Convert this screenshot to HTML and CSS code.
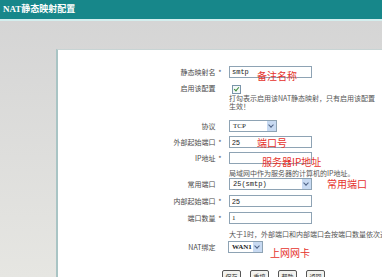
FILE: index.html
```html
<!DOCTYPE html>
<html lang="zh-CN">
<head>
    <meta charset="UTF-8">
    <title>NAT静态映射配置</title>
    <link rel="stylesheet" href="styles.css">
</head>
<body>
    <div class="title-bar">NAT静态映射配置</div>
    <div class="title-line"></div>

    <div class="page">
        <div class="panel">
            <form class="nat-form">
                <label class="lbl">静态映射名 <span class="req">*</span></label>
                <div class="cell"><input class="txt mono" type="text" value="smtp"></div>

                <label class="lbl">启用该配置 <span class="req blank">*</span></label>
                <div class="cell"><span class="check"></span></div>

                <div class="cell help two-lines">打勾表示启用该NAT静态映射，只有启用该配置<br>生效！</div>

                <label class="lbl">协议 <span class="req blank">*</span></label>
                <div class="cell">
                    <div class="sel sel-proto"><span class="sel-val serif">TCP</span><span class="arrow"></span></div>
                </div>

                <label class="lbl">外部起始端口 <span class="req">*</span></label>
                <div class="cell"><input class="txt" type="text" value="25"></div>

                <label class="lbl">IP地址 <span class="req">*</span></label>
                <div class="cell"><input class="txt" type="text" value=""></div>

                <div class="cell help">局域网中作为服务器的计算机的IP地址。</div>

                <label class="lbl">常用端口 <span class="req blank">*</span></label>
                <div class="cell">
                    <div class="sel sel-wide"><span class="sel-val mono">25(smtp)</span><span class="arrow"></span></div>
                </div>

                <label class="lbl">内部起始端口 <span class="req">*</span></label>
                <div class="cell"><input class="txt" type="text" value="25"></div>

                <label class="lbl">端口数量 <span class="req">*</span></label>
                <div class="cell"><input class="txt serif" type="text" value="1"></div>

                <div class="cell help">大于1时，外部端口和内部端口会按端口数量依次递增</div>

                <label class="lbl">NAT绑定 <span class="req blank">*</span></label>
                <div class="cell">
                    <div class="sel sel-nat"><span class="sel-val serif bold">WAN1</span><span class="arrow"></span></div>
                </div>

                <div class="buttons">
                    <button type="button">保存</button>
                    <button type="button">重填</button>
                    <button type="button">帮助</button>
                    <button type="button">返回</button>
                </div>
            </form>
        </div>

        <!-- red notes drawn over the form -->
        <span class="note note-name">备注名称</span>
        <span class="note note-port">端口号</span>
        <span class="note note-ip">服务器IP地址</span>
        <span class="note note-common">常用端口</span>
        <span class="note note-wan">上网网卡</span>
    </div>
</body>
</html>
```

FILE: styles.css
```css
body {
    margin: 0;
    font-family: "Noto Sans CJK SC", "Liberation Sans", sans-serif;
    background: #d6d6d4;
    overflow: hidden;
}
.title-bar {
    height: 19px;
    line-height: 19px;
    padding-left: 3px;
    background: #17878a;
    color: #fff;
    font-size: 9px;
    font-weight: bold;
    font-family: "Liberation Serif", "Noto Sans CJK SC", serif;
}
.title-line {
    height: 2px;
    background: #d4eeee;
}
.page {
    position: relative;
    height: 256px;
    padding: 28px 0 0 56px;
    box-sizing: border-box;
    background: linear-gradient(#d5d5d5, #e6e6e2);
}
.panel {
    background: #fff;
    height: 100%;
    border-left: 2px solid #a9c4c4;
    border-top: 1px solid #c8d4d4;
    box-sizing: border-box;
    padding-top: 16px;
}
.nat-form {
    display: grid;
    grid-template-columns: 165px 1fr;
    grid-template-rows: 16px 12px 26px 16px 16px 16px 10px 17px 17px 17px 12px 27px 14px;
    column-gap: 6px;
    font-size: 7px;
    color: #4a4a4a;
}
.lbl {
    grid-column: 1;
    text-align: right;
    line-height: 12px;
    align-self: start;
    white-space: nowrap;
}
.req {
    display: inline-block;
    width: 6px;
    text-align: center;
    color: #555;
}
.req.blank {
    visibility: hidden;
}
.cell {
    grid-column: 2;
    align-self: start;
}
.help {
    color: #555;
    line-height: 8px;
    padding-top: 1px;
    white-space: nowrap;
}
.help.two-lines {
    line-height: 8px;
    padding-top: 0;
}
.txt {
    display: block;
    width: 83px;
    height: 12px;
    margin: 0;
    padding: 0 0 0 2px;
    box-sizing: border-box;
    border: 1px solid #8ea3b4;
    font-size: 7px;
    font-family: "Liberation Sans", sans-serif;
    color: #222;
    background: #fff;
}
.mono {
    font-family: "Liberation Mono", monospace;
}
.serif {
    font-family: "Liberation Serif", serif;
}
.bold {
    font-weight: bold;
}
.check {
    display: block;
    position: relative;
    width: 7px;
    height: 7px;
    margin: 3px 0 0 3px;
    border: 1px solid #7a95aa;
    background: #f4f8f8;
}
.check::after {
    content: "";
    position: absolute;
    left: 2px;
    top: 0;
    width: 2px;
    height: 4px;
    border-right: 1px solid #3b8a3b;
    border-bottom: 1px solid #3b8a3b;
    transform: rotate(40deg);
}
.sel {
    display: flex;
    align-items: center;
    height: 12px;
    box-sizing: border-box;
    border: 1px solid #8ea3b4;
    background: #fff;
    color: #222;
}
.sel-proto {
    width: 48px;
}
.sel-wide {
    width: 83px;
}
.sel-nat {
    width: 35px;
    margin-left: -1px;
}
.sel-val {
    flex: 1;
    padding-left: 3px;
    font-size: 7px;
}
.arrow {
    width: 9px;
    height: 10px;
    background: #c8daf2;
    position: relative;
}
.arrow::after {
    content: "";
    position: absolute;
    left: 2px;
    top: 2px;
    width: 3px;
    height: 3px;
    border-right: 1px solid #4d6185;
    border-bottom: 1px solid #4d6185;
    transform: rotate(45deg);
}
.buttons {
    grid-column: 1 / 3;
    display: flex;
    gap: 9px;
    padding-left: 164px;
    align-self: end;
}
.buttons button {
    width: 19px;
    height: 12px;
    padding: 0;
    font-size: 6px;
    font-family: "Noto Sans CJK SC", sans-serif;
    color: #333;
    background: #f2f2ee;
    border: 1px solid #555;
    border-radius: 2px;
}
.note {
    position: absolute;
    color: #e5322c;
    font-size: 10px;
    line-height: 10px;
    white-space: nowrap;
}
.note-name {
    left: 257px;
    top: 50px;
}
.note-port {
    left: 257px;
    top: 117px;
}
.note-ip {
    left: 262px;
    top: 136px;
}
.note-common {
    left: 327px;
    top: 158px;
}
.note-wan {
    left: 270px;
    top: 227px;
}
```
